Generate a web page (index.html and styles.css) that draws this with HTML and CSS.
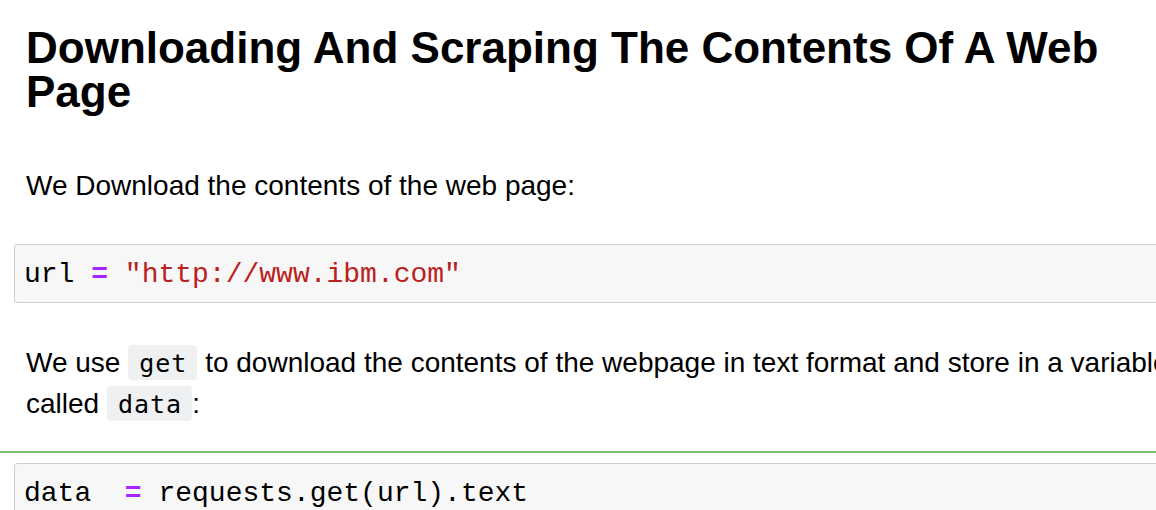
FILE: index.html
```html
<!DOCTYPE html>
<html>
<head>
<meta charset="utf-8">
<link rel="stylesheet" href="styles.css">
</head>
<body>
<div class="page">
  <div class="text-cell">
    <h1 class="title">Downloading And Scraping The Contents Of A Web Page</h1>
    <p class="para">We Download the contents of the web page:</p>
  </div>
  <div class="code-cell">
    <div class="code-box"><span class="n">url</span> <span class="o">=</span> <span class="s">"http://www.ibm.com"</span></div>
  </div>
  <div class="text-cell">
    <p class="para para-2">We use <code class="inline">get</code> to download the contents of the webpage in text format and store in a variable called <code class="inline">data</code>:</p>
  </div>
  <div class="code-cell selected">
    <div class="code-box"><span class="n">data</span>  <span class="o">=</span> <span class="n">requests.get(url).text</span></div>
  </div>
</div>
</body>
</html>
```

FILE: styles.css
```css
html, body {
  margin: 0;
  padding: 0;
  overflow: hidden;
  background: #ffffff;
}

.page {
  width: 1210px;
  font-family: "Liberation Sans", Arial, Helvetica, sans-serif;
  color: #000000;
}

.text-cell {
  padding: 0 33px 0 26px;
}

.title {
  margin: 0;
  padding-top: 26px;
  font-size: 44px;
  line-height: 44px;
  font-weight: 700;
}

.para {
  margin: 52px 0 0 0;
  font-size: 28px;
  line-height: 40px;
}

.para-2 {
  margin-top: 40px;
}

.code-cell {
  padding: 0 0 0 14px;
  margin-top: 38px;
}

.code-cell.selected {
  margin-top: 26px;
  border-top: 2px solid #7bbd73;
  padding-top: 10px;
}

.code-box {
  background: #f7f7f7;
  border: 1px solid #cfcfcf;
  border-radius: 3px;
  padding: 13px 9px 10px 9px;
  font-family: "Liberation Mono", "Courier New", monospace;
  font-size: 28px;
  line-height: 34px;
  white-space: pre;
  color: #000000;
}

.o {
  color: #aa22ff;
  font-weight: 700;
}

.s {
  color: #ba2121;
}

.inline {
  font-family: "DejaVu Sans Mono", Menlo, monospace;
  font-size: 25px;
  letter-spacing: 1px;
  background: #eff0f1;
  border-radius: 4px;
  padding: 4px 10px 2px 11px;
}
```
